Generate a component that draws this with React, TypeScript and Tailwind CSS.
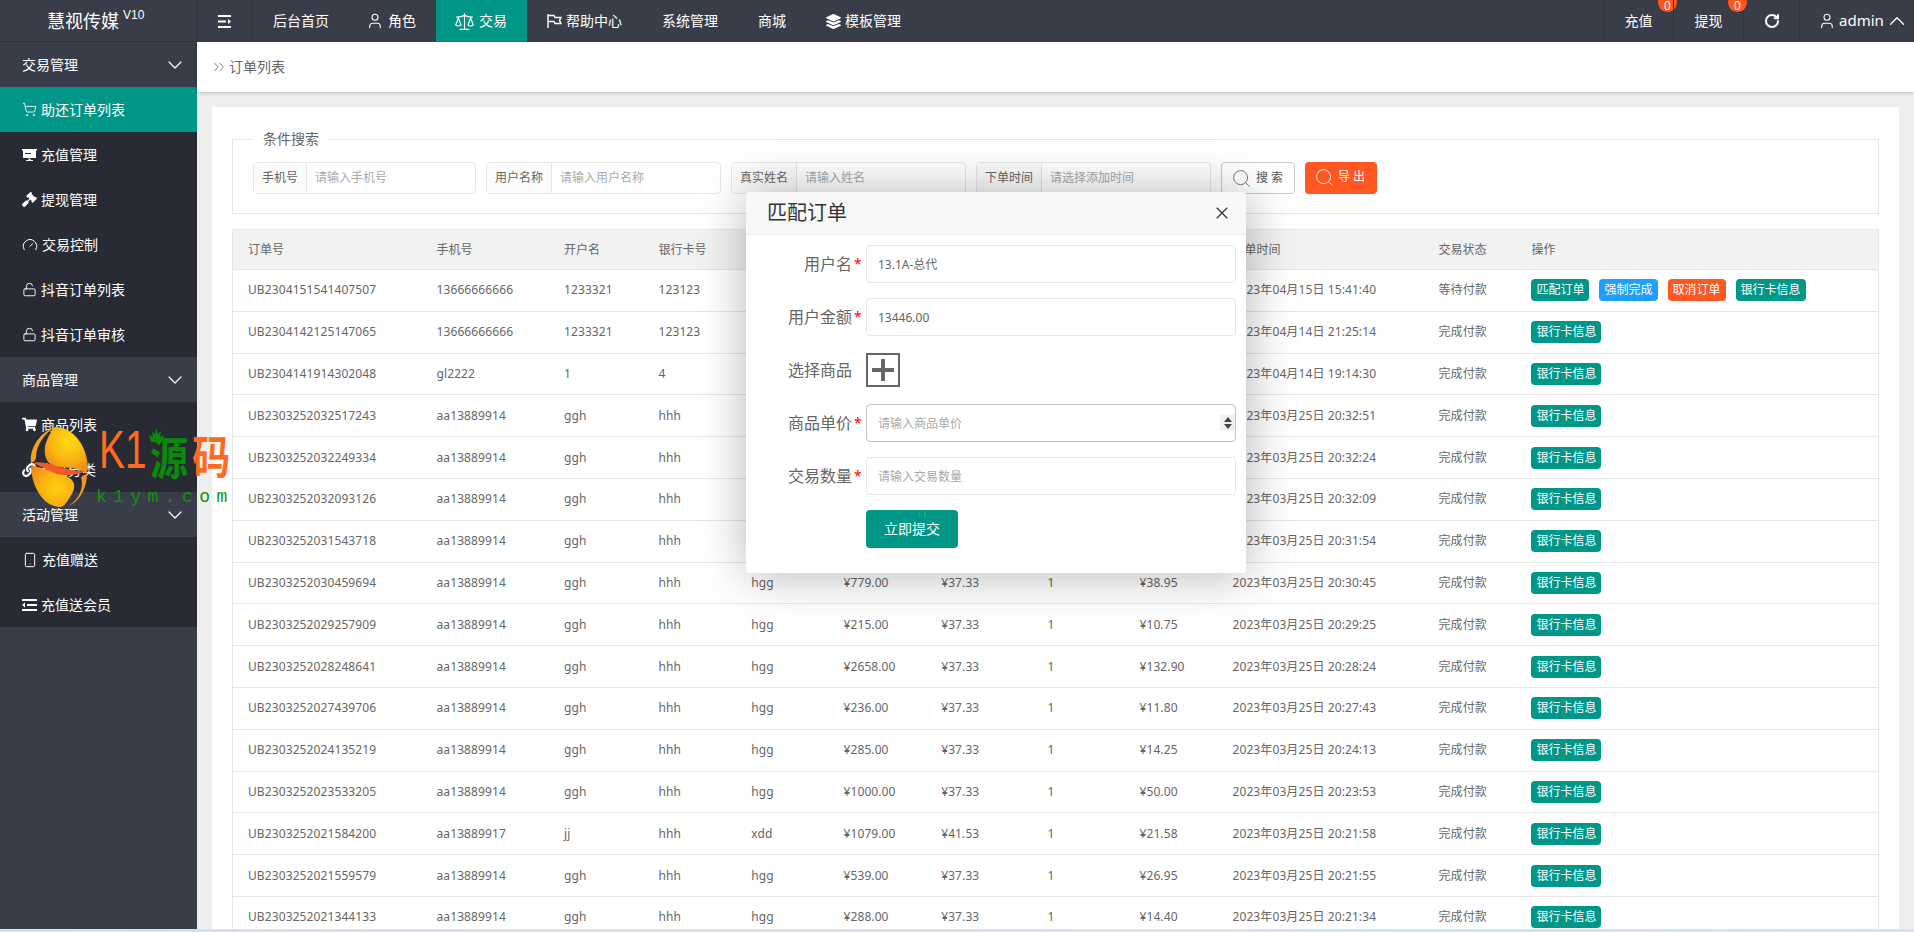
import {
  ChevronDown,
  ChevronUp,
  ChevronsRight,
  Gauge,
  LockOpen,
  RotateCw,
  Scale,
  Search,
  ShoppingCart,
  Smartphone,
  User,
  X,
} from "lucide-react";
import { FaGavel, FaLayerGroup, FaLink, FaShoppingCart } from "react-icons/fa";
import type { ReactNode } from "react";

const nav: { label: string; icon?: ReactNode; active?: boolean }[] = [
  { label: "后台首页" },
  { label: "角色", icon: <User size={18} strokeWidth={1.4} className="-ml-[3px]" /> },
  { label: "交易", icon: <Scale size={21} strokeWidth={1.3} className="-ml-[2px]" />, active: true },
  {
    label: "帮助中心",
    icon: (
      <svg width="15" height="14" viewBox="0 0 15 14" fill="none" stroke="currentColor" strokeWidth="1.4">
        <path d="M1 0v14M1 1.500h6l1 2h6l-1.500 3 1.500 3H8l-1-2H1" />
      </svg>
    ),
  },
  { label: "系统管理" },
  { label: "商城" },
  { label: "模板管理", icon: <FaLayerGroup size={15} /> },
];

const menu: { group: string; items: { label: string; icon: ReactNode; active?: boolean }[] }[] = [
  {
    group: "交易管理",
    items: [
      { label: "助还订单列表", icon: <ShoppingCart size={15} strokeWidth={1.4} />, active: true },
      {
        label: "充值管理",
        icon: (
          <svg width="15" height="14" viewBox="0 0 15 14" fill="currentColor">
            <path d="M0 1h15v1.500h-1V10H1V2.500H0zM3 5v1h6V5zM6.500 10.500h2V12H11v1H4v-1h2.500z" fillRule="evenodd" />
          </svg>
        ),
      },
      { label: "提现管理", icon: <FaGavel size={15} /> },
      { label: "交易控制", icon: <Gauge size={16} strokeWidth={1.5} /> },
      { label: "抖音订单列表", icon: <LockOpen size={15} strokeWidth={1.5} /> },
      { label: "抖音订单审核", icon: <LockOpen size={15} strokeWidth={1.5} /> },
    ],
  },
  {
    group: "商品管理",
    items: [
      { label: "商品列表", icon: <FaShoppingCart size={15} /> },
      { label: "商品分类", icon: <FaLink size={14} /> },
    ],
  },
  {
    group: "活动管理",
    items: [
      { label: "充值赠送", icon: <Smartphone size={16} strokeWidth={1.5} /> },
      {
        label: "充值送会员",
        icon: (
          <svg width="15" height="14" viewBox="0 0 15 14" fill="currentColor">
            <path d="M0 1h15v2H0zM5 6h10v2H5zM0 11h15v2H0zM0 7l3-2.500v5z" />
          </svg>
        ),
      },
    ],
  },
];

type Row = [string, string, string, string, string, string, string, string, string, string, string];

const row = (
  id: string,
  phone: string,
  owner: string,
  card: string,
  bank: string,
  amount: string,
  price: string,
  fee: string,
  time: string,
  state = "完成付款",
): Row => [id, phone, owner, card, bank, amount, price, "1", fee, time, state];

const rows: Row[] = [
  row("UB2304151541407507", "13666666666", "1233321", "123123", "123", "¥13446.00", "¥37.33", "¥672.30", "2023年04月15日 15:41:40", "等待付款"),
  row("UB2304142125147065", "13666666666", "1233321", "123123", "123", "¥500.00", "¥37.33", "¥25.00", "2023年04月14日 21:25:14"),
  row("UB2304141914302048", "gl2222", "1", "4", "3", "¥300.00", "¥37.33", "¥15.00", "2023年04月14日 19:14:30"),
  row("UB2303252032517243", "aa13889914", "ggh", "hhh", "hgg", "¥560.00", "¥37.33", "¥28.00", "2023年03月25日 20:32:51"),
  row("UB2303252032249334", "aa13889914", "ggh", "hhh", "hgg", "¥420.00", "¥37.33", "¥21.00", "2023年03月25日 20:32:24"),
  row("UB2303252032093126", "aa13889914", "ggh", "hhh", "hgg", "¥380.00", "¥37.33", "¥19.00", "2023年03月25日 20:32:09"),
  row("UB2303252031543718", "aa13889914", "ggh", "hhh", "hgg", "¥640.00", "¥37.33", "¥32.00", "2023年03月25日 20:31:54"),
  row("UB2303252030459694", "aa13889914", "ggh", "hhh", "hgg", "¥779.00", "¥37.33", "¥38.95", "2023年03月25日 20:30:45"),
  row("UB2303252029257909", "aa13889914", "ggh", "hhh", "hgg", "¥215.00", "¥37.33", "¥10.75", "2023年03月25日 20:29:25"),
  row("UB2303252028248641", "aa13889914", "ggh", "hhh", "hgg", "¥2658.00", "¥37.33", "¥132.90", "2023年03月25日 20:28:24"),
  row("UB2303252027439706", "aa13889914", "ggh", "hhh", "hgg", "¥236.00", "¥37.33", "¥11.80", "2023年03月25日 20:27:43"),
  row("UB2303252024135219", "aa13889914", "ggh", "hhh", "hgg", "¥285.00", "¥37.33", "¥14.25", "2023年03月25日 20:24:13"),
  row("UB2303252023533205", "aa13889914", "ggh", "hhh", "hgg", "¥1000.00", "¥37.33", "¥50.00", "2023年03月25日 20:23:53"),
  row("UB2303252021584200", "aa13889917", "jj", "hhh", "xdd", "¥1079.00", "¥41.53", "¥21.58", "2023年03月25日 20:21:58"),
  row("UB2303252021559579", "aa13889914", "ggh", "hhh", "hgg", "¥539.00", "¥37.33", "¥26.95", "2023年03月25日 20:21:55"),
  row("UB2303252021344133", "aa13889914", "ggh", "hhh", "hgg", "¥288.00", "¥37.33", "¥14.40", "2023年03月25日 20:21:34"),
];

const headers = ["订单号", "手机号", "开户名", "银行卡号", "银行名称", "订单金额", "商品单价", "数量", "手续费", "下单时间", "交易状态", "操作"];
const colWidths = [189, 127.5, 94.5, 92.7, 92.3, 97.7, 106.3, 92, 93, 206, 93];

function SearchField({ label, placeholder, width, labelWidth }: { label: string; placeholder: string; width: string; labelWidth: string }) {
  return (
    <div className={`flex h-8 border border-[#e6e6e6] rounded-sm bg-white ${width}`}>
      <span className={`flex items-center justify-center bg-[#fbfbfb] border-r border-[#e6e6e6] text-xs text-[#666] ${labelWidth}`}>{label}</span>
      <input className="flex-1 min-w-0 px-2 text-xs outline-none placeholder:text-[#aaa]" placeholder={placeholder} />
    </div>
  );
}

function Tag({ color, children }: { color: string; children: ReactNode }) {
  return <span className={`inline-flex items-center h-[22px] px-[5px] rounded-sm text-xs text-white ${color}`}>{children}</span>;
}

function FormRow({ label, required = true, children }: { label: string; required?: boolean; children: ReactNode }) {
  return (
    <div className="flex items-center">
      <div className="w-[120px] flex justify-end items-center text-base text-[#666]">
        {label}
        <span className={`w-[14px] pl-[2px] text-sm text-[#f00] ${required ? "" : "invisible"}`}>*</span>
      </div>
      {children}
    </div>
  );
}

function Watermark() {
  return (
    <div className="absolute left-[30px] top-[427px] w-[205px] h-[80px] pointer-events-none">
      <svg className="absolute left-0 top-0" width="58" height="80" viewBox="0 0 58 80">
        <defs>
          <radialGradient id="egg-top" cx="0.55" cy="0.3" r="0.7">
            <stop offset="0" stopColor="#ffdc10" />
            <stop offset="0.55" stopColor="#fbb810" />
            <stop offset="1" stopColor="#ee8a1c" />
          </radialGradient>
          <radialGradient id="egg-bottom" cx="0.6" cy="0.55" r="0.7">
            <stop offset="0" stopColor="#ffd410" />
            <stop offset="0.55" stopColor="#f9b010" />
            <stop offset="1" stopColor="#ec8a1c" />
          </radialGradient>
        </defs>
        <path d="M25 0C44 0 58 20 58 42L56 47C46 38 30 42 22 38C14 34 13 22 17 13C19 8 22 3 25 0Z" fill="url(#egg-top)" />
        <path d="M25 0C15 6 6 18 6 30C6 33 4 35 1 36C-1 22 10 5 25 0Z" fill="#f5a01a" />
        <path d="M1 38C14 42 28 45 38 50C46 54 46 62 40 70C37 75 34 80 30 80C14 80 1 60 1 38Z" fill="url(#egg-bottom)" />
        <path d="M51 50C54 60 50 72 38 79C50 75 57 60 57 47Z" fill="#f0981c" />
        <path d="M3 36C18 32 36 46 56 44C46 49 30 50 20 44C14 41 8 38 3 36Z" fill="#ee5a24" />
      </svg>
      <span className="absolute left-[69px] top-[-5px] origin-left scale-x-[0.72] font-['Liberation_Sans',sans-serif] text-[54px] leading-[54px] text-[#ff6a20]">K1</span>
      <svg className="absolute left-[119px] top-[1px]" width="15" height="15" viewBox="0 0 15 15" fill="#0a8a0a">
        <path d="M7.500 0l1.500 6 3-3-1 6 4-2-2 7H2L0 7l4 2-1-6 3 3z" />
      </svg>
      <span className="absolute left-[120px] top-[6px] origin-left scale-x-[0.85] font-['Noto_Sans_CJK_SC',sans-serif] font-bold text-[45px] leading-[45px] text-[#0a8a0a]">源</span>
      <span className="absolute left-[162px] top-[5px] origin-left scale-x-[0.85] font-['Noto_Sans_CJK_SC',sans-serif] font-bold text-[45px] leading-[45px] text-[#ff6a20]">码</span>
      <span className="absolute left-[66px] top-[61px] font-['Liberation_Mono',monospace] text-lg leading-[18px] tracking-[6.400px] text-[#0a960a]">k1ym.com</span>
    </div>
  );
}

export default function App() {
  return (
    <div className="relative flex flex-col h-[932px] overflow-hidden bg-[#eee] font-['Noto_Sans','Noto_Sans_CJK_SC',sans-serif]">
      <header className="flex h-[42px] shrink-0 bg-[#393d49] text-sm text-white">
        <div className="flex items-center w-[197px] pl-[47px] border-b border-[#2f323c]">
          <span className="text-lg">慧视传媒</span>
          <span className="ml-1 mb-3 text-xs font-['Liberation_Sans',sans-serif]">V10</span>
        </div>
        <div className="flex items-center justify-center w-[56px] border-x border-[#30333e]">
          <svg width="14" height="13" viewBox="0 0 14 13" fill="currentColor">
            <path d="M0 0h13v2H0zM0 5.500h8v2H0zM0 11h13v2H0zM13 6.500l-3-2.500v5z" />
          </svg>
        </div>
        {nav.map((item) => (
          <div key={item.label} className={`flex items-center gap-[4px] h-full px-5 ${item.active ? "bg-[#009688]" : ""}`}>
            {item.icon}
            <span>{item.label}</span>
          </div>
        ))}
        <div className="ml-auto flex">
          {["充值", "提现"].map((label) => (
            <div key={label} className="relative flex items-center justify-center w-[70px] border-l border-[#30333e]">
              {label}
              <span className="absolute left-[54px] top-[-7px] flex items-center justify-center w-[19px] h-[19px] rounded-full bg-[#ff5722] text-xs pt-[6px]">0</span>
            </div>
          ))}
          <div className="flex items-center justify-center w-[56px] border-l border-[#30333e]">
            <RotateCw size={16} strokeWidth={3} />
          </div>
          <div className="flex items-center w-[115px] pl-[18px] gap-[3px] border-l border-[#30333e]">
            <User size={18} strokeWidth={1.4} className="shrink-0" />
            <span className="text-[15px]">admin</span>
            <ChevronUp size={26} strokeWidth={1.2} className="shrink-0 -ml-[3px] text-white" />
          </div>
        </div>
      </header>

      <div className="flex flex-1 min-h-0">
        <aside className="w-[197px] shrink-0 bg-[#393d49] text-sm text-white">
          {menu.map((section) => (
            <div key={section.group}>
              <div className="flex items-center justify-between h-[45px] pl-[22px] pr-[10px]">
                {section.group}
                <ChevronDown size={24} strokeWidth={1.2} />
              </div>
              <div className="bg-[#282b33]">
                {section.items.map((item) => (
                  <div key={item.label} className={`flex items-center gap-[4px] h-[45px] pl-[22px] ${item.active ? "bg-[#009688]" : ""}`}>
                    {item.icon}
                    <span>{item.label}</span>
                  </div>
                ))}
              </div>
            </div>
          ))}
        </aside>

        <main className="flex flex-col flex-1 min-w-0">
          <div className="relative z-10 flex items-center h-[50px] shrink-0 pl-[13px] gap-[1px] bg-white text-sm text-[#666] shadow-[0_1px_4px_rgba(0,0,0,0.2)]">
            <ChevronsRight size={18} strokeWidth={1.1} className="text-[#666]" />
            <span>订单列表</span>
          </div>
          <div className="flex-1 min-h-0 mt-[15px] mx-[15px] px-5 pt-[22px] bg-white overflow-hidden">
            <fieldset className="border border-[#e6e6e6] pl-5 pr-5 pt-[13px] pb-[19px] mb-[15px]">
              <legend className="px-[10px] text-sm leading-5 text-[#666]">条件搜索</legend>
              <div className="flex gap-[10px]">
                <SearchField label="手机号" placeholder="请输入手机号" width="w-[223px]" labelWidth="w-[53px]" />
                <SearchField label="用户名称" placeholder="请输入用户名称" width="w-[235px]" labelWidth="w-[65px]" />
                <SearchField label="真实姓名" placeholder="请输入姓名" width="w-[235px]" labelWidth="w-[65px]" />
                <SearchField label="下单时间" placeholder="请选择添加时间" width="w-[235px]" labelWidth="w-[65px]" />
                <button className="flex items-center gap-1 w-[74px] h-8 pl-[9px] bg-white border border-[#c9c9c9] rounded-sm text-xs text-[#555]">
                  <Search size={21} strokeWidth={1} className="text-[#667]" />
                  搜 索
                </button>
                <button className="flex items-center gap-[3px] w-[72px] h-8 pl-[9px] bg-[#ff5722] rounded-sm text-xs text-white">
                  <Search size={21} strokeWidth={1} className="-translate-y-[1px]" />
                  <span className="-translate-y-[1px]">导 出</span>
                </button>
              </div>
            </fieldset>

            <table className="w-full table-fixed border-collapse border-x border-[#e6e6e6] text-xs text-[#666]">
              <colgroup>
                {colWidths.map((w, i) => (
                  <col key={i} style={{ width: w }} />
                ))}
                <col />
              </colgroup>
              <thead>
                <tr className="h-[40px] bg-[#f2f2f2] border-y border-[#e6e6e6]">
                  {headers.map((h) => (
                    <th key={h} className="pl-[15px] text-left font-normal">{h}</th>
                  ))}
                </tr>
              </thead>
              <tbody>
                {rows.map((r, i) => (
                  <tr key={r[0]} className="h-[41.8px] border-b border-[#e6e6e6]">
                    {r.map((cell, j) => (
                      <td key={j} className="pl-[15px] whitespace-nowrap tracking-[0.1px]">{cell}</td>
                    ))}
                    <td className="pl-[15px]">
                      <div className="flex gap-[10px]">
                        {i === 0 && (
                          <>
                            <Tag color="bg-[#009688]">匹配订单</Tag>
                            <Tag color="bg-[#1e9fff]">强制完成</Tag>
                            <Tag color="bg-[#ff5722]">取消订单</Tag>
                          </>
                        )}
                        <Tag color="bg-[#009688]">银行卡信息</Tag>
                      </div>
                    </td>
                  </tr>
                ))}
              </tbody>
            </table>
          </div>
        </main>
      </div>

      <div className="h-[3px] shrink-0 bg-gradient-to-r from-[#cfe2e8] via-[#d3e6ef] to-[#d6e4ee]" />

      <Watermark />

      <div className="absolute left-[746px] top-[192px] w-[500px] bg-white rounded-sm shadow-[1px_1px_50px_rgba(0,0,0,0.3)]">
        <div className="flex items-center justify-between h-[43px] pl-[21px] pr-[14px] bg-[#f8f8f8] border-b border-[#eee] rounded-t-sm text-xl text-[#333]">
          匹配订单
          <X size={20} strokeWidth={1.4} />
        </div>
        <div className="flex flex-col gap-[15px] pt-[10px] pr-[10px] pb-[25px]">
          <FormRow label="用户名">
            <input readOnly defaultValue="13.1A-总代" className="flex-1 h-[38px] px-[11px] border border-[#e6e6e6] rounded-sm text-xs text-[#666] outline-none" />
          </FormRow>
          <FormRow label="用户金额">
            <input readOnly defaultValue="13446.00" className="flex-1 h-[38px] px-[11px] border border-[#e6e6e6] rounded-sm text-xs text-[#666] outline-none" />
          </FormRow>
          <FormRow label="选择商品" required={false}>
            <div className="flex items-center h-[38px] flex-1">
              <div className="flex items-center justify-center w-[34px] h-[34px] border-2 border-[#666] text-[#666]">
                <svg width="24" height="24" viewBox="0 0 24 24" fill="currentColor">
                  <path d="M10.500 1h3a.5.5 0 0 1 .5.500V10h8.500a.5.5 0 0 1 .5.500v3a.5.5 0 0 1-.5.500H14v8.500a.5.5 0 0 1-.5.500h-3a.5.5 0 0 1-.5-.500V14H1.500a.5.5 0 0 1-.5-.500v-3a.5.5 0 0 1 .5-.500H10V1.500a.5.5 0 0 1 .5-.500z" />
                </svg>
              </div>
            </div>
          </FormRow>
          <FormRow label="商品单价">
            <div className="relative flex-1">
              <input placeholder="请输入商品单价" className="w-full h-[38px] px-[11px] border border-[#c2c2c2] rounded-sm text-xs outline-none placeholder:text-[#aaa]" />
              <span className="absolute right-[1px] top-[11px] flex items-center justify-center w-[15px] h-[16px] bg-[#f0f0f0]">
                <svg width="8" height="12" viewBox="0 0 8 12" fill="#444">
                  <path d="M4 0l4 5H0zM0 7h8l-4 5z" />
                </svg>
              </span>
            </div>
          </FormRow>
          <FormRow label="交易数量">
            <input placeholder="请输入交易数量" className="flex-1 h-[38px] px-[11px] border border-[#e6e6e6] rounded-sm text-xs outline-none placeholder:text-[#aaa]" />
          </FormRow>
          <div className="pl-[120px]">
            <button className="w-[92px] h-[38px] bg-[#009688] rounded-sm text-sm text-white">立即提交</button>
          </div>
        </div>
      </div>
    </div>
  );
}
